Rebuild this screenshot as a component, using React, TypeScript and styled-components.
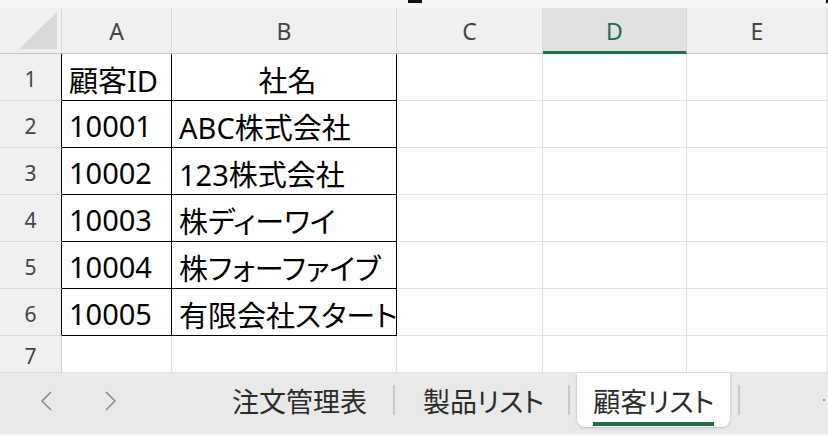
import { ReactElement } from 'react';
import styled, { createGlobalStyle } from 'styled-components';

const GlobalStyle = createGlobalStyle`
  html, body {
    margin: 0;
    padding: 0;
    background: #ffffff;
  }
  body {
    font-family: 'Noto Sans CJK JP', 'Noto Sans', sans-serif;
  }
`;

const columns = ['A', 'B', 'C', 'D', 'E'];
const selectedColumn = 'D';

const rows: string[][] = [
  ['顧客ID', '社名'],
  ['10001', 'ABC株式会社'],
  ['10002', '123株式会社'],
  ['10003', '株ディーワイ'],
  ['10004', '株フォーファイブ'],
  ['10005', '有限会社スタート'],
  ['', ''],
];

const sheets = ['注文管理表', '製品リスト', '顧客リスト'];
const activeSheet = '顧客リスト';

export default function App(): ReactElement {
  return (
    <>
      <GlobalStyle />
      <Window>
        <TopStrip>
          <Handle $left={408} $width={14} />
          <Handle $left={826} $width={2} />
        </TopStrip>
        <Sheet>
          <Corner>
            <SelectAll />
          </Corner>
          {columns.map((c) => (
            <ColumnHeader key={c} $selected={c === selectedColumn}>
              {c}
            </ColumnHeader>
          ))}
          {rows.map((row, i) => {
            const boxed = i < 6;
            return [
              <RowHeader key={`h${i}`} $boxed={boxed}>
                {i + 1}
              </RowHeader>,
              <Cell key={`a${i}`} $boxed={boxed}>
                {row[0]}
              </Cell>,
              <Cell key={`b${i}`} $boxed={boxed} $center={i === 0}>
                {row[1]}
              </Cell>,
              <Cell key={`c${i}`} />,
              <Cell key={`d${i}`} />,
              <Cell key={`e${i}`} />,
            ];
          })}
        </Sheet>
        <TabBar>
          <Nav>
            <Chevron viewBox="0 0 12 20">
              <path d="M11 1 L2 10 L11 19" />
            </Chevron>
            <Chevron viewBox="0 0 12 20">
              <path d="M1 1 L10 10 L1 19" />
            </Chevron>
          </Nav>
          {sheets.map((s, i) => {
            const active = s === activeSheet;
            return [
              <Tab key={s} $active={active} $first={i === 0}>
                <TabLabel $active={active}>{s}</TabLabel>
              </Tab>,
              <Separator key={`sep${i}`} />,
            ];
          })}
          <Dot />
        </TabBar>
        <BottomStrip />
      </Window>
    </>
  );
}

const Window = styled.div`
  position: relative;
  width: 828px;
  height: 438px;
  display: flex;
  flex-direction: column;
  overflow: hidden;
  background: #ffffff;
`;

const TopStrip = styled.div`
  position: relative;
  height: 8px;
  flex: none;
  background: #f5f5f5;
`;

const Handle = styled.div<{ $left: number; $width: number }>`
  position: absolute;
  top: 0;
  left: ${(p) => p.$left}px;
  width: ${(p) => p.$width}px;
  height: 3px;
  background: #111111;
`;

const Sheet = styled.div`
  flex: none;
  height: 365px;
  display: grid;
  grid-template-columns: 62px 110px 225px 146px 144px 1fr;
  grid-template-rows: 46px repeat(6, 47px) 1fr;
  overflow: hidden;
`;

const Corner = styled.div`
  box-sizing: border-box;
  background: #f0f0f0;
  border-right: 1px solid #d8d8d8;
  border-bottom: 1px solid #c4c4c4;
  display: flex;
  align-items: flex-end;
  justify-content: flex-end;
  padding: 0 4px 4px 0;
`;

const SelectAll = styled.div`
  width: 38px;
  height: 37px;
  background: #d9d9d9;
  clip-path: polygon(100% 0, 100% 100%, 0 100%);
`;

const ColumnHeader = styled.div<{ $selected: boolean }>`
  box-sizing: border-box;
  background: ${(p) => (p.$selected ? '#e1e1e1' : '#f0f0f0')};
  border-right: 1px solid #d8d8d8;
  border-bottom: ${(p) =>
    p.$selected ? '3px solid #217346' : '1px solid #c4c4c4'};
  color: ${(p) => (p.$selected ? '#1e6e42' : '#444444')};
  font-family: 'Noto Sans', 'Liberation Sans', sans-serif;
  font-size: 23px;
  display: flex;
  align-items: center;
  justify-content: center;
  padding-top: ${(p) => (p.$selected ? '2px' : '0')};
`;

const RowHeader = styled.div<{ $boxed: boolean }>`
  box-sizing: border-box;
  background: #f0f0f0;
  border-right: 1px solid ${(p) => (p.$boxed ? '#000000' : '#cfcfcf')};
  border-bottom: 1px solid #dadada;
  color: #444444;
  font-family: 'Noto Sans', 'Liberation Sans', sans-serif;
  font-size: 21px;
  display: flex;
  align-items: center;
  justify-content: center;
  padding: 4px 0 0 0;
`;

const Cell = styled.div<{ $boxed?: boolean; $center?: boolean }>`
  box-sizing: border-box;
  border-right: 1px solid ${(p) => (p.$boxed ? '#000000' : '#e1e1e1')};
  border-bottom: 1px solid ${(p) => (p.$boxed ? '#000000' : '#e1e1e1')};
  color: #000000;
  font-family: 'Noto Sans', 'Noto Sans CJK JP', sans-serif;
  font-feature-settings: 'palt';
  font-size: 29px;
  white-space: nowrap;
  overflow: hidden;
  display: flex;
  align-items: center;
  justify-content: ${(p) => (p.$center ? 'center' : 'flex-start')};
  padding: 3px 0 0 7px;
`;

const TabBar = styled.div`
  flex: none;
  height: 61px;
  background: #e9e9e9;
  display: flex;
  align-items: flex-start;
`;

const Nav = styled.div`
  width: 206px;
  height: 54px;
  display: flex;
  align-items: center;
  gap: 53px;
  padding-left: 40px;
  box-sizing: border-box;
`;

const Chevron = styled.svg`
  width: 12px;
  height: 20px;
  fill: none;
  stroke: #8c8c8c;
  stroke-width: 1.6;
  padding-top: 2px;
`;

const Tab = styled.div<{ $active: boolean; $first: boolean }>`
  height: 54px;
  box-sizing: border-box;
  display: flex;
  align-items: center;
  padding: ${(p) =>
    p.$active ? '0 16px 0 16px' : p.$first ? '0 26px 0 26px' : '0 24px 0 28px'};
  margin: ${(p) => (p.$active ? '0 8px 0 7px' : '0')};
  background: ${(p) => (p.$active ? '#ffffff' : 'transparent')};
  border-radius: ${(p) => (p.$active ? '0 0 8px 8px' : '0')};
  box-shadow: ${(p) => (p.$active ? '0 1px 3px rgba(0, 0, 0, 0.18)' : 'none')};
`;

const TabLabel = styled.span<{ $active: boolean }>`
  position: relative;
  font-family: 'Noto Sans CJK JP', sans-serif;
  font-feature-settings: 'palt';
  font-size: 27px;
  color: #2b2b2b;
  white-space: nowrap;
  padding-bottom: 2px;
  border-bottom: 4px solid ${(p) => (p.$active ? '#1e7145' : 'transparent')};
  margin-top: 6px;
`;

const Separator = styled.div`
  width: 2px;
  height: 30px;
  margin-top: 12px;
  background: #c9c9c9;
`;

const Dot = styled.div`
  width: 2px;
  height: 2px;
  margin: 26px 3px 0 auto;
  background: #9a9a9a;
`;

const BottomStrip = styled.div`
  flex: 1;
  border-top: 1px solid #f4f4f4;
  background: #ffffff;
`;
